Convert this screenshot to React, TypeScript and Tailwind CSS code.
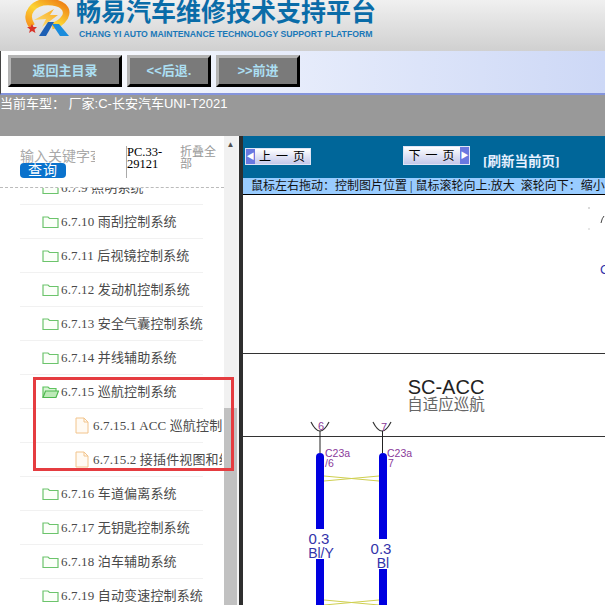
const sans = "font-['Liberation_Sans','Noto_Sans_CJK_SC',sans-serif]";
const serif = "font-['Liberation_Serif','Noto_Sans_CJK_SC',serif]";

type Row = { label: string; leaf?: boolean; open?: boolean };
const rows: Row[] = [
  { label: "6.7.9 照明系统" },
  { label: "6.7.10 雨刮控制系统" },
  { label: "6.7.11 后视镜控制系统" },
  { label: "6.7.12 发动机控制系统" },
  { label: "6.7.13 安全气囊控制系统" },
  { label: "6.7.14 并线辅助系统" },
  { label: "6.7.15 巡航控制系统", open: true },
  { label: "6.7.15.1 ACC 巡航控制系统", leaf: true },
  { label: "6.7.15.2 接插件视图和线束", leaf: true },
  { label: "6.7.16 车道偏离系统" },
  { label: "6.7.17 无钥匙控制系统" },
  { label: "6.7.18 泊车辅助系统" },
  { label: "6.7.19 自动变速控制系统" },
];

function Folder({ open }: { open?: boolean }) {
  return (
    <svg width="17" height="14" viewBox="0 0 17 14" className="shrink-0" fill="none" strokeWidth="1.2">
      {open ? (
        <>
          <path d="M1 12.5V2h5l1.5 1.5H14V6" stroke="#5fc35f" fill="#d8f4d4" />
          <path d="M1 12.5 3.5 6H16.5L14 12.5Z" stroke="#4fb84f" fill="#bdeab8" />
        </>
      ) : (
        <path d="M1 12.5V2h5l1.5 1.5H16v9Z" stroke="#6cc46c" fill="#fbfff9" />
      )}
    </svg>
  );
}

function FileIcon() {
  return (
    <svg width="14" height="17" viewBox="0 0 14 17" className="shrink-0" fill="none">
      <path d="M1 1h8l4 4v11H1Z" stroke="#f2c48c" fill="#fffaf3" />
      <path d="M9 1v4h4" stroke="#f2c48c" />
    </svg>
  );
}

function TreeRow({ row }: { row: Row }) {
  return (
    <>
      <div className={`flex h-[33px] w-[222px] items-center overflow-hidden whitespace-nowrap ${row.leaf ? "pl-[75px]" : "pl-[42px]"}`}>
        {row.leaf ? <FileIcon /> : <Folder open={row.open} />}
        <span className={`${row.leaf ? "ml-1" : "ml-[2px]"} ${serif} text-[13px] tracking-[0.15px] text-[#4a4a4a]`}>{row.label}</span>
      </div>
      <div className="ml-5 h-px w-[183px] bg-[#f1f1f1]" />
    </>
  );
}

function Logo() {
  return (
    <svg width="50" height="38" viewBox="0 0 50 38" className="shrink-0">
      <defs>
        <linearGradient id="ring" x1="0" y1="1" x2="1" y2="0">
          <stop offset="0" stopColor="#f7931e" />
          <stop offset="0.45" stopColor="#fcd434" />
          <stop offset="1" stopColor="#ee7a12" />
        </linearGradient>
        <linearGradient id="bolt" x1="0" y1="1" x2="1" y2="0">
          <stop offset="0" stopColor="#fde27a" />
          <stop offset="1" stopColor="#f8a81c" />
        </linearGradient>
      </defs>
      <path d="M7 26C-2 13 9 2 23 2 37 2 44 9 40 17 37 22 32 25 27 26" stroke="url(#ring)" strokeWidth="6.5" fill="none" />
      <path d="M9 20 29 9 25 15H33L17 27 21 19Z" fill="url(#bolt)" />
      <path d="M7 24 8.5 27 12 27 9.5 29.5 10.5 33 7 31 4 33 5 29.5 2 27 5.5 27Z" fill="#d8342a" />
      <path d="M14 36 23 22H29L21 36Z" fill="#1d5fb4" />
      <path d="M27 24 34 24 44 36H35Z" fill="#1b8cdc" />
    </svg>
  );
}

function NavButton({ label, width }: { label: string; width: string }) {
  return (
    <div className={`flex h-[32px] ${width} items-center justify-center border-[3px] border-t-[#b4b4b4] border-l-[#b4b4b4] border-r-black border-b-black bg-[#7a7a7a] ${sans} text-[13px] font-bold text-[#acdff2]`}>
      {label}
    </div>
  );
}

function PageButton({ label, side, cls }: { label: string; side: "left" | "right"; cls: string }) {
  const arrow = (
    <div className="flex h-full w-[9px] items-center justify-center bg-[#6a78e0] text-[8px] leading-none text-white">
      {side === "left" ? "◀" : "▶"}
    </div>
  );
  return (
    <div className={`flex items-center border border-[#dfe4f5] bg-gradient-to-b from-white to-[#c4c8ea] ${cls}`}>
      {side === "left" && arrow}
      <div className={`flex-1 text-center ${serif} text-[12px] leading-[14px] tracking-[1px] text-black`}>{label}</div>
      {side === "right" && arrow}
    </div>
  );
}

function Diagram() {
  const purple = "#8a3a9a";
  const blue = "#3333aa";
  return (
    <svg width="362" height="411" viewBox="243 194 362 411" className="block">
      <g fontFamily="'Liberation Sans','Noto Sans CJK SC',sans-serif">
        <line x1="243" y1="352.5" x2="605" y2="352.5" stroke="#333" />
        <line x1="243" y1="435.5" x2="605" y2="435.5" stroke="#333" />
        <text x="446" y="393" fontSize="20" textAnchor="middle" fill="#222">SC-ACC</text>
        <text x="446" y="409" fontSize="15.5" textAnchor="middle" fill="#666">自适应巡航</text>

        <path d="M311 421 Q320 439 329 421" stroke="#333" fill="none" strokeWidth="1.2" />
        <path d="M373 421 Q382 439 391 421" stroke="#333" fill="none" strokeWidth="1.2" />
        <text x="321" y="429" fontSize="11" textAnchor="middle" fill={purple}>6</text>
        <text x="384" y="430" fontSize="11" textAnchor="middle" fill={purple}>7</text>
        <line x1="320" y1="430" x2="320" y2="452" stroke="#222" />
        <line x1="382.5" y1="430" x2="382.5" y2="452" stroke="#222" />

        <path d="M316 456a4 4 0 0 1 8 0V528H316Z" fill="#0000e0" />
        <rect x="316" y="558" width="8" height="47" fill="#0000e0" />
        <path d="M379 456a4 4 0 0 1 8 0V538H379Z" fill="#0000e0" />
        <rect x="379" y="568" width="8" height="37" fill="#0000e0" />

        <path d="M324 475 379 480M324 480 379 475" stroke="#cfcf50" fill="none" />
        <path d="M324 599 379 604M324 604 379 599" stroke="#cfcf50" fill="none" />

        <text x="325" y="456" fontSize="10.5" fill={purple}>C23a</text>
        <text x="325" y="466" fontSize="10.5" fill={purple}>/6</text>
        <text x="387" y="456" fontSize="10.5" fill={purple}>C23a</text>
        <text x="388" y="466" fontSize="10.5" fill={purple}>7</text>

        <text x="319" y="543" fontSize="15" textAnchor="middle" fill={blue}>0.3</text>
        <text x="321" y="557" fontSize="14" textAnchor="middle" fill={blue}>Bl/Y</text>
        <text x="381" y="553" fontSize="15" textAnchor="middle" fill={blue}>0.3</text>
        <text x="383" y="567" fontSize="14" textAnchor="middle" fill={blue}>Bl</text>

        <path d="M601 222 Q602 217 604 215" stroke="#444" fill="none" />
        <circle cx="589" cy="207" r="0.7" fill="#999" />
        <circle cx="589" cy="228" r="0.7" fill="#bbb" />
        <text x="600" y="273" fontSize="13" fill={blue}>C</text>
      </g>
    </svg>
  );
}

export default function App() {
  return (
    <div className={`relative flex h-[605px] w-[605px] flex-col overflow-hidden bg-white ${sans}`}>
      <header className="flex h-[51px] items-start overflow-hidden bg-gradient-to-b from-[#f0f0f0] to-[#d0d0d0] pl-[25px]">
        <Logo />
        <div className="ml-[1px] flex flex-col">
          <div className="h-[27px] whitespace-nowrap text-[25px] font-bold leading-[25px] text-[#0a6ca8]">畅易汽车维修技术支持平台</div>
          <div className="ml-[3px] mt-[1px] whitespace-nowrap text-[8.7px] font-bold leading-[12px] text-[#1a78b8]">
            CHANG YI AUTO MAINTENANCE TECHNOLOGY SUPPORT PLATFORM
          </div>
        </div>
      </header>

      <div className="flex h-[44px] items-start gap-[5px] border-b-2 border-l border-b-[#8494dc] border-l-[#444] bg-gradient-to-r from-white to-[#cdd8f6] pl-[7px] pt-[4px]">
        <NavButton label="返回主目录" width="w-[114px]" />
        <NavButton label="<<后退." width="w-[84px]" />
        <NavButton label=">>前进" width="w-[84px]" />
      </div>

      <div className="h-[41px] bg-[#999999] pt-[1px] text-[13px] leading-[16px] text-white">当前车型： 厂家:C-长安汽车UNI-T2021</div>

      <main className="flex min-h-0 flex-1">
        <div className="flex w-[224px] flex-col overflow-hidden">
          <div className="relative flex h-[52px] shrink-0 border-b border-dashed border-b-[#bbb]">
            <div className="ml-5 w-[106px] shrink-0 pt-[12px]">
              <div className="h-[16px] w-[75px] overflow-hidden whitespace-nowrap text-[14px] leading-[16px] text-[#a9a9a9]">输入关键字查询</div>
              <div className="-mt-[1px] flex h-[15px] w-[46px] items-center justify-center rounded-[4px] bg-[#0a72cc] text-[14px] tracking-[1px] text-white">查询</div>
            </div>
            <div className={`mt-[10px] h-[32px] w-[54px] shrink-0 border-l border-l-[#aaa] ${serif} text-[12.5px] leading-[12px] text-black`}>PC.33-<br />29121</div>
            <div className="mt-[10px] w-[40px] shrink-0 text-[12px] leading-[12px] text-[#999]">折叠全部</div>
          </div>
          <div className="min-h-0 flex-1 overflow-hidden">
            <div className="-mt-[17px]">
              {rows.map((r, i) => (
                <TreeRow key={i} row={r} />
              ))}
            </div>
          </div>
        </div>

        <div className="flex w-[13px] shrink-0 flex-col bg-[#f1f1f1]">
          <div className="flex h-[18px] items-center justify-center text-[8px] leading-none text-[#505050]">▲</div>
          <div className="mt-[254px] flex-1 bg-[#c1c1c1]" />
        </div>

        <div className="w-[2px] shrink-0 bg-[#f4f4f4]" />
        <div className="w-[4px] shrink-0 bg-[#2e2e2e]" />

        <div className="flex min-w-0 flex-1 flex-col">
          <div className="relative h-[42px] shrink-0 bg-[#006699]">
            <PageButton label="上 一 页" side="left" cls="absolute left-[2px] top-[12px] h-[17px] w-[66px]" />
            <PageButton label="下 一 页" side="right" cls="absolute left-[160px] top-[10px] h-[19px] w-[67px]" />
            <div className={`absolute left-[240px] top-[16px] whitespace-nowrap ${serif} text-[13.5px] font-bold text-[#e6f0ff]`}>[刷新当前页]</div>
          </div>
          <div className={`h-[17px] shrink-0 overflow-hidden whitespace-nowrap border-b border-b-black bg-[#99ccff] pl-[8px] pt-[1px] ${serif} text-[12px] leading-[15px] text-[#111]`}>
            鼠标左右拖动：控制图片位置 | 鼠标滚轮向上:放大&nbsp;&nbsp;滚轮向下：缩小
          </div>
          <div className="min-h-0 flex-1 overflow-hidden bg-white">
            <Diagram />
          </div>
        </div>
      </main>

      <div className="absolute left-[33px] top-[377px] h-[94px] w-[201px] border-[3px] border-[#e53c40]" />
    </div>
  );
}
